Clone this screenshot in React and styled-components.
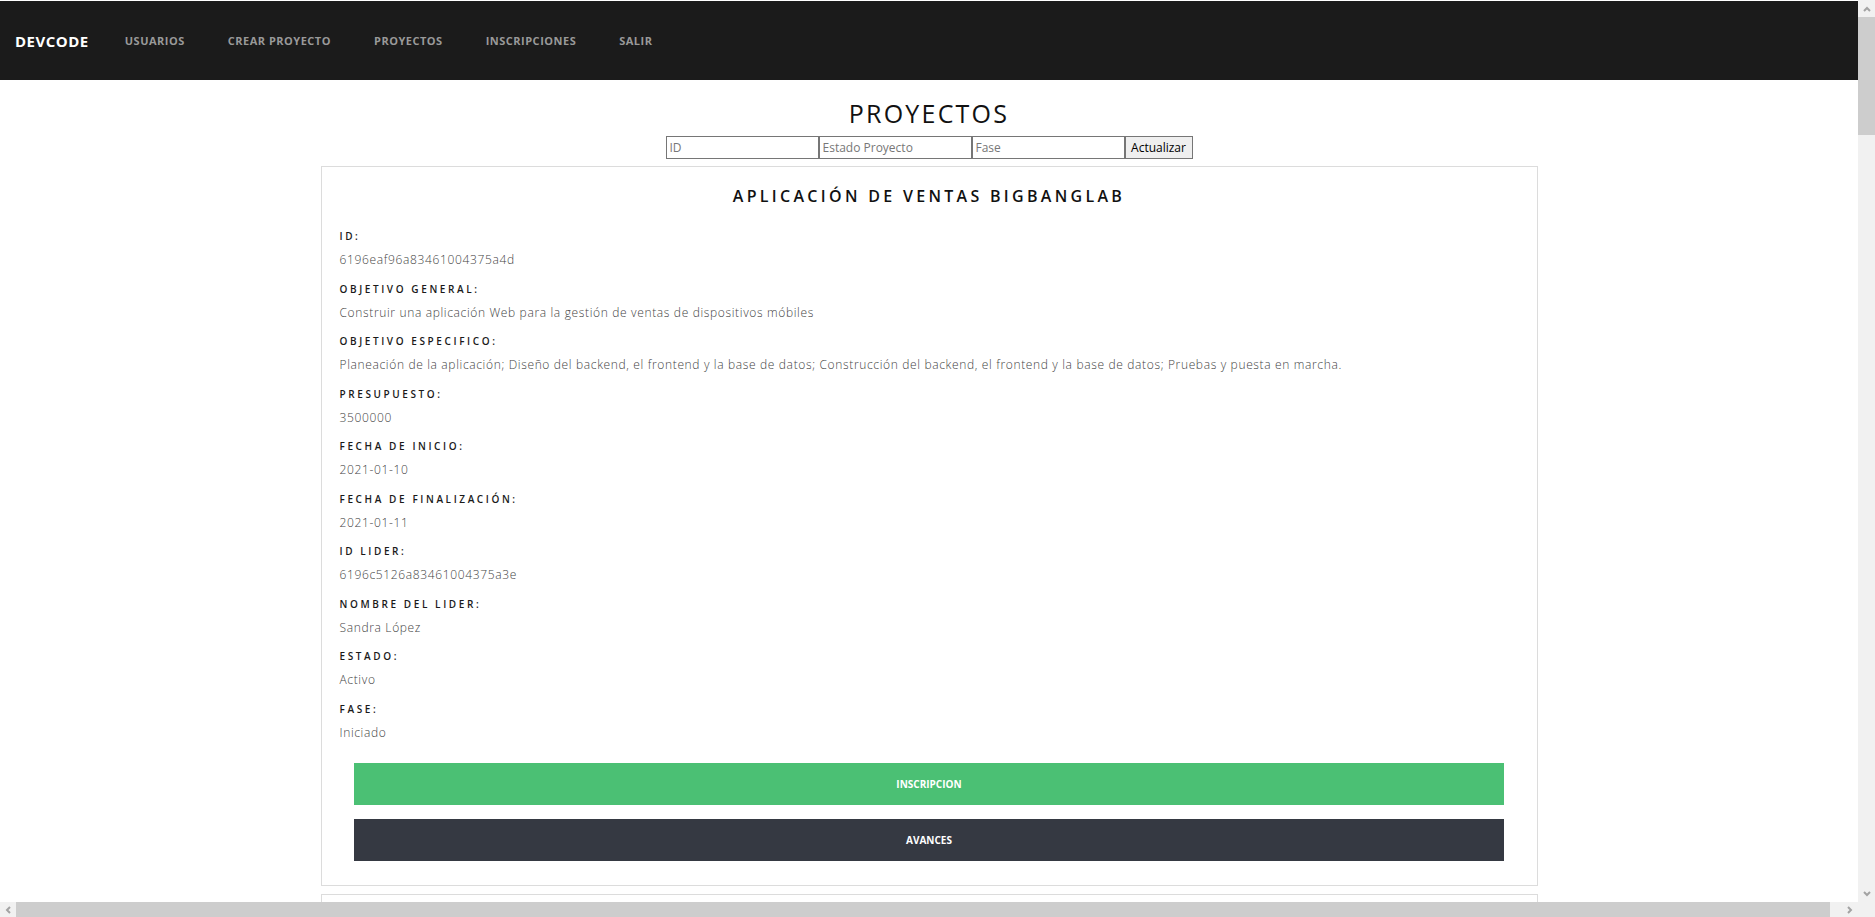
import React from "react";
import styled, { createGlobalStyle } from "styled-components";

const GlobalStyle = createGlobalStyle`
  html, body {
    margin: 0;
    padding: 0;
    background: #fff;
    font-family: "Open Sans", "Liberation Sans", sans-serif;
  }
  body {
    padding-top: 1px;
    overflow-x: hidden;
  }
`;

const Nav = styled.nav`
  width: 100vw;
  height: 79px;
  background-color: #1b1b1b;
  display: flex;
  align-items: center;
  padding: 0 15px;
  box-sizing: border-box;
`;

const Brand = styled.span`
  color: #fff;
  font-size: 15px;
  font-weight: 700;
  letter-spacing: 0.5px;
  margin-right: 36px;
`;

const NavLink = styled.a`
  color: #999;
  font-size: 11px;
  font-weight: 700;
  letter-spacing: 0.5px;
  text-transform: uppercase;
  text-decoration: none;
  margin-right: 43px;
  cursor: pointer;
`;

const Main = styled.main`
  width: calc(100vw - 17px);
  display: flex;
  flex-direction: column;
  align-items: center;
  padding-top: 16px;
`;

const PageTitle = styled.h1`
  margin: 0;
  font-size: 25px;
  line-height: 34px;
  font-weight: 500;
  letter-spacing: 2.2px;
  color: #111;
`;

const Filters = styled.form`
  display: flex;
  margin: 6px 0 7px;
`;

const Input = styled.input`
  width: 153px;
  height: 23px;
  box-sizing: border-box;
  border: 1px solid #767676;
  padding: 0 3px;
  font-family: "Open Sans", sans-serif;
  font-size: 12px;
  color: #222;
  &::placeholder {
    color: #777;
  }
`;

const SubmitButton = styled.button`
  width: 68px;
  height: 23px;
  box-sizing: border-box;
  border: 1px solid #767676;
  background: #efefef;
  font-family: "Open Sans", sans-serif;
  font-size: 12px;
  color: #000;
  padding: 0;
`;

const Card = styled.section`
  width: 1217px;
  box-sizing: border-box;
  border: 1px solid #dcdcdc;
  padding: 17px 18px 24px;
  margin-bottom: 8px;
  display: flex;
  flex-direction: column;
`;

const CardTitle = styled.h2`
  margin: 0 0 18px;
  text-align: center;
  font-size: 16px;
  line-height: 24px;
  font-weight: 600;
  letter-spacing: 3.3px;
  text-transform: uppercase;
  color: #111;
`;

const Label = styled.div`
  font-size: 10px;
  line-height: 20px;
  font-weight: 600;
  letter-spacing: 2.6px;
  text-transform: uppercase;
  color: #1a1a1a;
  margin-bottom: 4px;
`;

const Value = styled.div`
  font-size: 12px;
  line-height: 20px;
  font-weight: 300;
  letter-spacing: 0.65px;
  color: #444;
  margin-bottom: 8.5px;
`;

const Actions = styled.div`
  display: flex;
  flex-direction: column;
  align-items: center;
  gap: 14px;
  margin: 12px -18px 0;
`;

const ActionButton = styled.button`
  width: 94.7%;
  height: 42px;
  border: none;
  background-color: ${(p) => (p.$variant === "green" ? "#4bc074" : "#353942")};
  color: #fff;
  font-family: "Open Sans", sans-serif;
  font-size: 10px;
  font-weight: 700;
  text-transform: uppercase;
  cursor: pointer;
`;

/* browser-like scrollbars drawn over the page edges */
const VScroll = styled.div`
  position: fixed;
  top: 0;
  right: 0;
  bottom: 15px;
  width: 17px;
  background: #f1f1f1;
  display: flex;
  flex-direction: column;
`;

const HScroll = styled.div`
  position: fixed;
  left: 0;
  right: 0;
  bottom: 0;
  height: 15px;
  background: #f1f1f1;
  display: flex;
`;

const Arrow = styled.div`
  flex: 0 0 ${(p) => p.$size}px;
  display: flex;
  align-items: center;
  justify-content: center;
`;

const Track = styled.div`
  flex: 1;
  display: flex;
  flex-direction: ${(p) => (p.$vertical ? "column" : "row")};
`;

const Thumb = styled.div`
  background: #cdcdcd;
  flex: 0 0 ${(p) => p.$length}px;
`;

const Corner = styled.div`
  flex: 0 0 17px;
  background: #f1f1f1;
`;

const Chevron = ({ dir }) => {
  const paths = {
    up: "M2 7 L5 4 L8 7",
    down: "M2 3 L5 6 L8 3",
    left: "M7 2 L4 5 L7 8",
    right: "M3 2 L6 5 L3 8",
  };
  return (
    <svg width="10" height="10" viewBox="0 0 10 10">
      <path d={paths[dir]} fill="none" stroke="#a3a3a3" strokeWidth="2" />
    </svg>
  );
};

const proyectos = [
  {
    nombre: "Aplicación de ventas BigBangLab",
    _id: "6196eaf96a83461004375a4d",
    objetivoGeneral:
      "Construir una aplicación Web para la gestión de ventas de dispositivos móbiles",
    objetivoEspecifico:
      "Planeación de la aplicación; Diseño del backend, el frontend y la base de datos; Construcción del backend, el frontend y la base de datos; Pruebas y puesta en marcha.",
    presupuesto: "3500000",
    fechaInicio: "2021-01-10",
    fechaFin: "2021-01-11",
    lider: "6196c5126a83461004375a3e",
    nombreLider: "Sandra López",
    estado: "Activo",
    fase: "Iniciado",
  },
  {
    nombre: "Sistema de inventarios",
    _id: "6196eb3d6a83461004375a51",
    objetivoGeneral: "Desarrollar un sistema de control de inventarios",
    objetivoEspecifico:
      "Levantamiento de requisitos; Diseño de la base de datos; Desarrollo e implementación.",
    presupuesto: "2800000",
    fechaInicio: "2021-02-01",
    fechaFin: "2021-06-30",
    lider: "6196c5126a83461004375a3e",
    nombreLider: "Sandra López",
    estado: "Activo",
    fase: "Desarrollo",
  },
  {
    nombre: "Portal de clientes",
    _id: "6196ebaa6a83461004375a55",
    objetivoGeneral: "Crear un portal web de atención a clientes",
    objetivoEspecifico: "Diseño de interfaz; Desarrollo del portal; Pruebas.",
    presupuesto: "4200000",
    fechaInicio: "2021-03-15",
    fechaFin: "2021-09-15",
    lider: "6196c5406a83461004375a40",
    nombreLider: "Carlos Pérez",
    estado: "Inactivo",
    fase: "Nulo",
  },
];

const fields = [
  ["ID", "_id"],
  ["Objetivo general", "objetivoGeneral"],
  ["Objetivo especifico", "objetivoEspecifico"],
  ["Presupuesto", "presupuesto"],
  ["Fecha de inicio", "fechaInicio"],
  ["Fecha de finalización", "fechaFin"],
  ["ID Lider", "lider"],
  ["Nombre del lider", "nombreLider"],
  ["Estado", "estado"],
  ["Fase", "fase"],
];

const lista = [...proyectos, ...proyectos, ...proyectos];

const App = () => {
  return (
    <>
      <GlobalStyle />
      <Nav>
        <Brand>DEVCODE</Brand>
        <NavLink>Usuarios</NavLink>
        <NavLink>Crear Proyecto</NavLink>
        <NavLink>Proyectos</NavLink>
        <NavLink>Inscripciones</NavLink>
        <NavLink>Salir</NavLink>
      </Nav>
      <Main>
        <PageTitle>PROYECTOS</PageTitle>
        <Filters onSubmit={(e) => e.preventDefault()}>
          <Input placeholder="ID" />
          <Input placeholder="Estado Proyecto" />
          <Input placeholder="Fase" />
          <SubmitButton type="submit">Actualizar</SubmitButton>
        </Filters>
        {lista.map((p, index) => (
          <Card key={index}>
            <CardTitle>{p.nombre}</CardTitle>
            {fields.map(([label, key]) => (
              <div key={key}>
                <Label>{label}:</Label>
                <Value>{p[key]}</Value>
              </div>
            ))}
            <Actions>
              <ActionButton $variant="green">Inscripcion</ActionButton>
              <ActionButton>Avances</ActionButton>
            </Actions>
          </Card>
        ))}
      </Main>
      <VScroll>
        <Arrow $size={17}>
          <Chevron dir="up" />
        </Arrow>
        <Track $vertical>
          <Thumb $length={118} />
        </Track>
        <Arrow $size={17}>
          <Chevron dir="down" />
        </Arrow>
      </VScroll>
      <HScroll>
        <Arrow $size={16}>
          <Chevron dir="left" />
        </Arrow>
        <Track>
          <Thumb $length={1814} />
        </Track>
        <Arrow $size={16}>
          <Chevron dir="right" />
        </Arrow>
        <Corner />
      </HScroll>
    </>
  );
};

export default App;
